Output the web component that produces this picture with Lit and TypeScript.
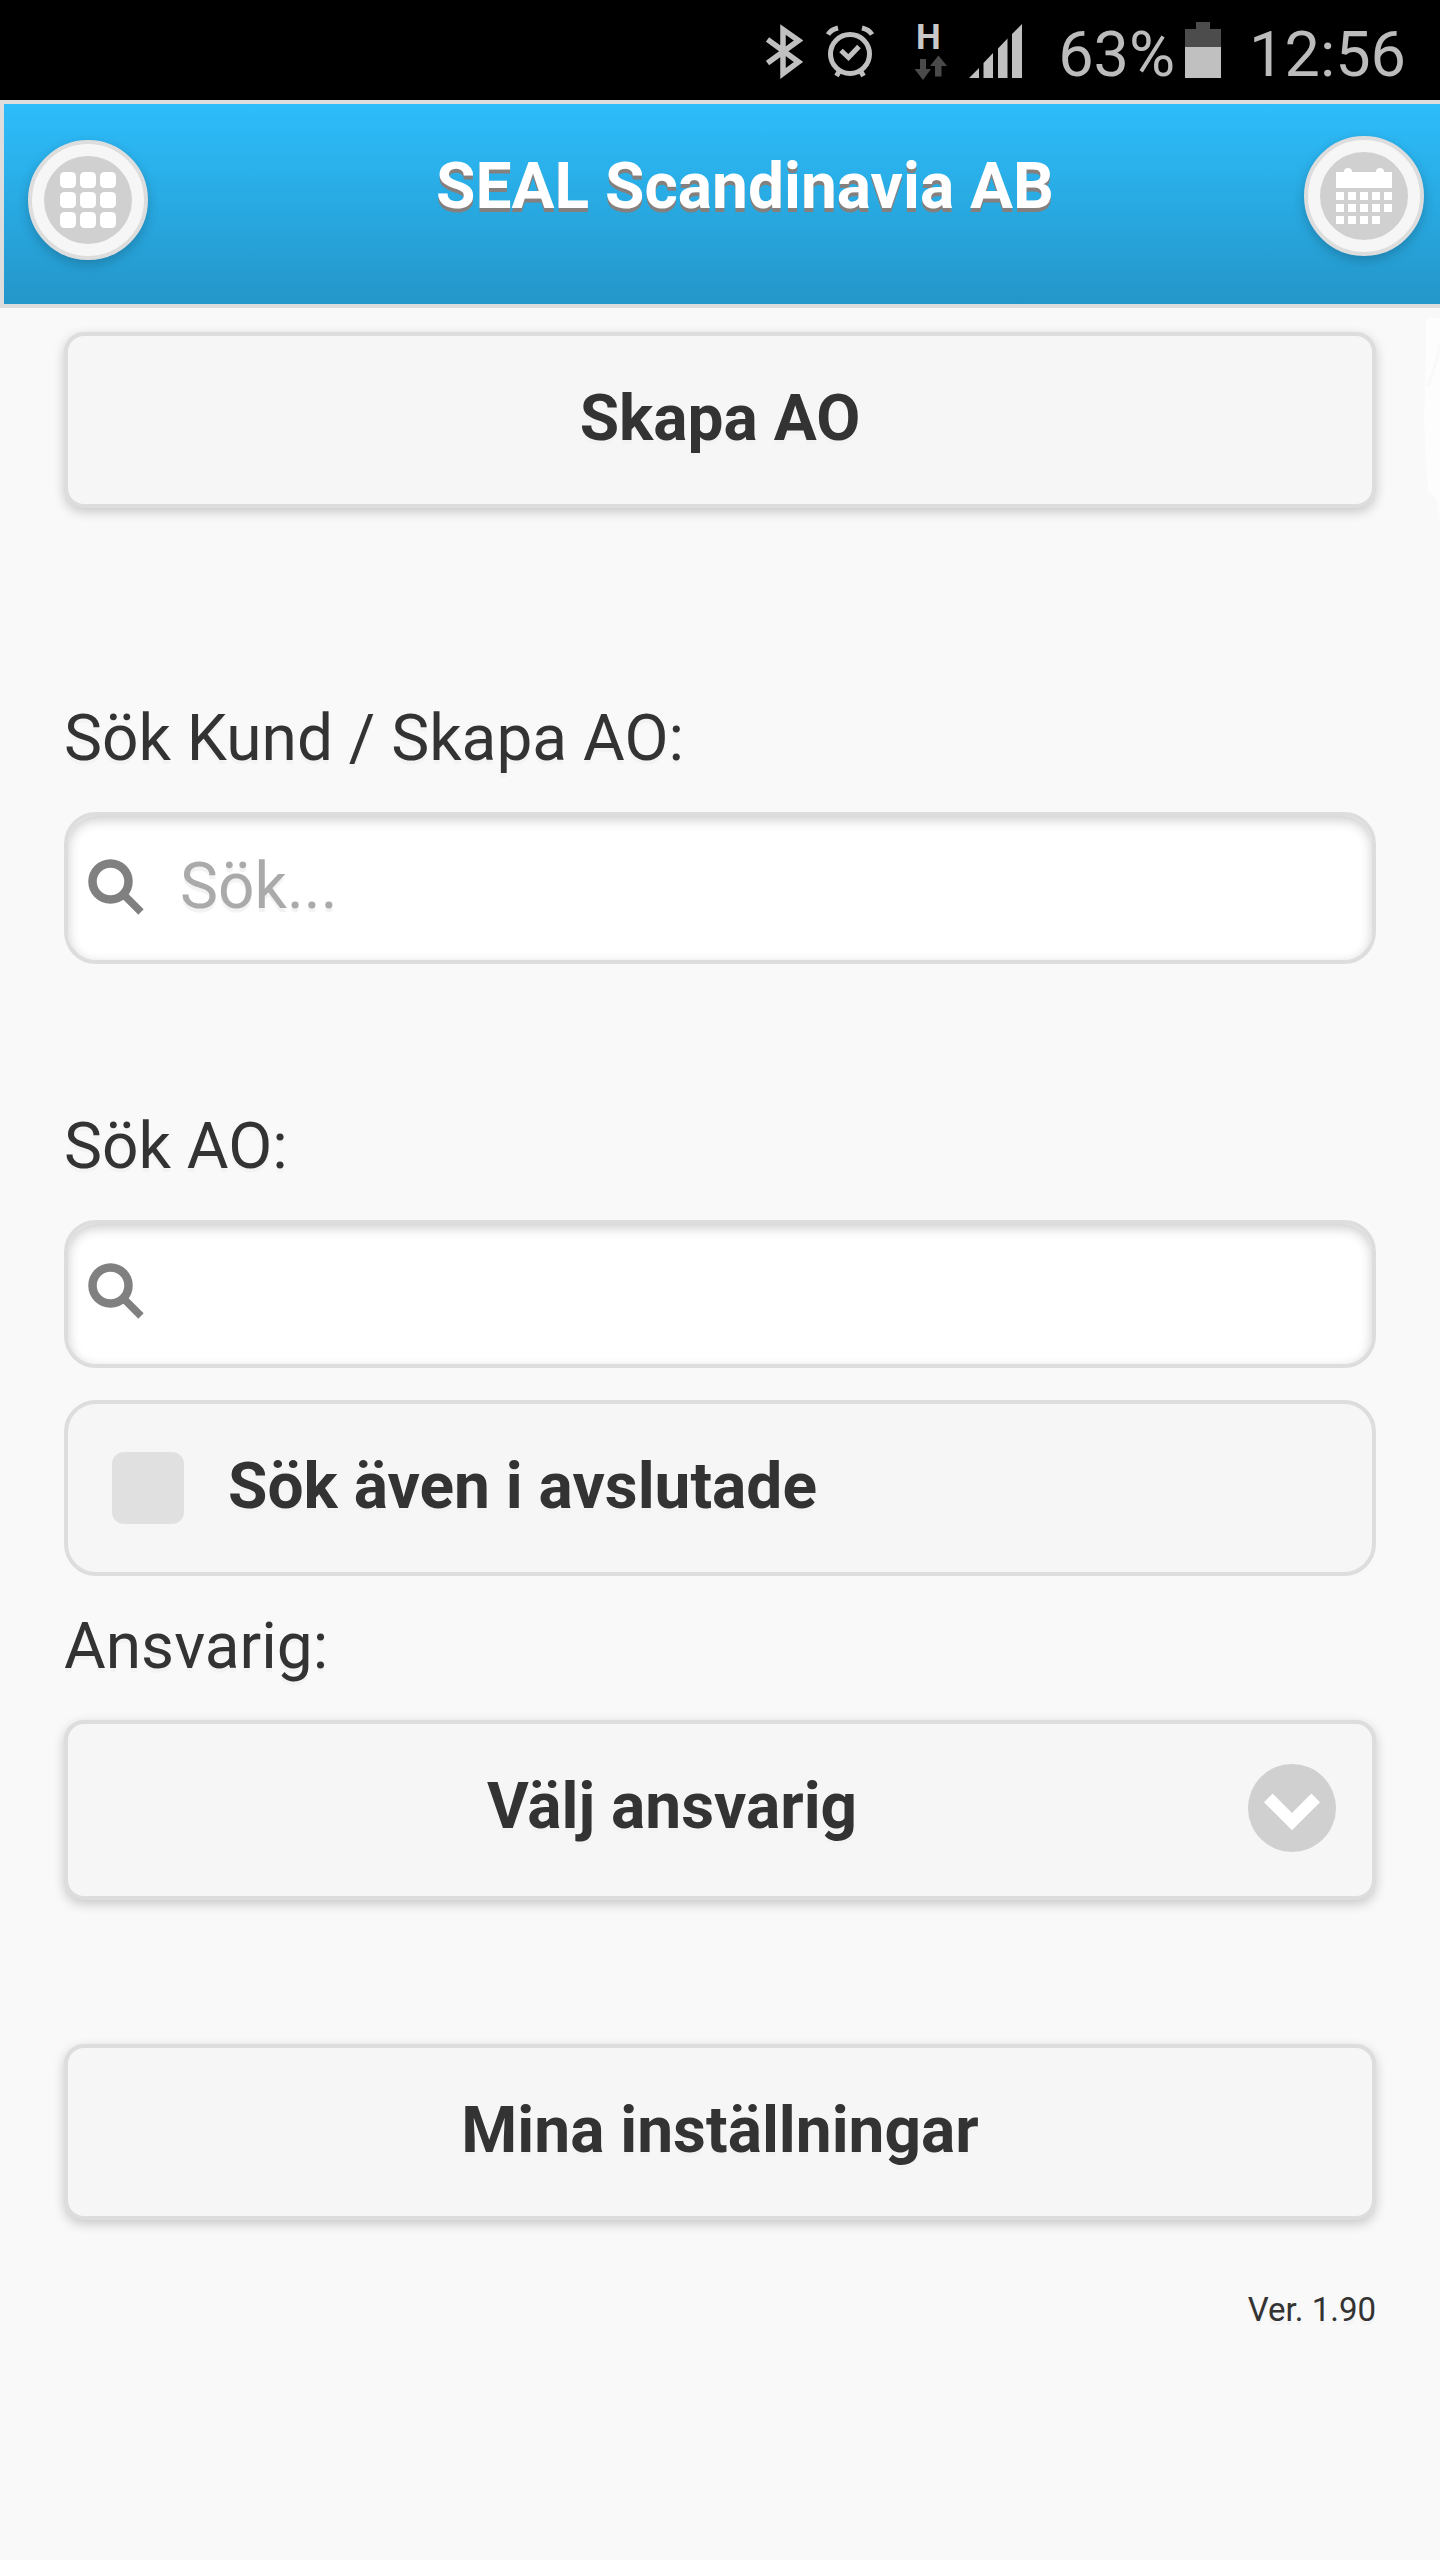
import { LitElement, html, css, svg } from "lit";
import { customElement, property, state } from "lit/decorators.js";

const base = css`
  * {
    box-sizing: border-box;
    margin: 0;
  }
  svg {
    display: block;
    flex: none;
  }
`;

@customElement("status-bar")
export class StatusBar extends LitElement {
  static styles = [
    base,
    css`
      :host {
        display: block;
      }
      .bar {
        display: flex;
        align-items: center;
        justify-content: flex-end;
        height: 100px;
        padding: 0 34px 0 24px;
        background: #000;
        color: #bcbcbc;
        font-size: 63px;
        line-height: 86px;
        text-shadow: none;
      }
      .icons {
        display: flex;
        gap: 22px;
        margin-right: 36px;
      }
      .power {
        display: flex;
        align-items: center;
        gap: 10px;
        margin-right: 28px;
      }
      .network {
        font: bold 35px Roboto, "Liberation Sans", sans-serif;
      }
      .text {
        padding-top: 10px;
      }
    `,
  ];

  render() {
    return html`
      <div class="bar">
        <div class="icons">
          <svg width="37" height="60" viewBox="766 20 37 60" fill="none" stroke="#c0c0c0" role="img" aria-label="Bluetooth">
            <path d="M767.5 39.5L798.5 62L783 73.500V29.500L798.500 40.500L767.500 63" stroke-width="5.500" />
          </svg>
          <svg width="50" height="60" viewBox="825 20 50 60" fill="none" stroke="#c0c0c0" stroke-width="5" role="img" aria-label="Alarm">
            <circle cx="850" cy="54" r="19.500" />
            <path d="M841 50.500L848.500 57.500L859 46.500" />
            <path d="M828 34.500Q831 29.500 838 28M872 34.500Q869 29.500 862 28" />
            <path d="M840 70L836.500 76M860 70L863.500 76" />
          </svg>
          <svg width="50" height="60" viewBox="897 20 50 60" overflow="visible" role="img" aria-label="Mobildata">
            <text class="network" x="916" y="49" fill="#c8c8c8">H</text>
            <path d="M920 59H926V69H931L923 80L914.500 69H920Z" fill="#4a4a4a" />
            <path d="M935 76.500H941.500V66H947L938.500 55.500L930 66H935Z" fill="#4a4a4a" />
          </svg>
          <svg width="53" height="60" viewBox="969 20 53 60" fill="#c0c0c0" role="img" aria-label="Signal">
            <path d="M969 78L979 68V78ZM983.500 78V63L993 53V78ZM998 78V48.500L1007.500 38.500V78ZM1012 78V34L1022 24V78Z" />
          </svg>
        </div>
        <div class="power">
          <span class="text">63%</span>
          <svg width="36" height="60" viewBox="0 0 36 60" role="img" aria-label="Batteri">
            <path d="M11 2H25V9H36V27H0V9H11Z" fill="#4c4c4c" />
            <rect y="27" width="36" height="31" fill="#c0c0c0" />
          </svg>
        </div>
        <span class="text">12:56</span>
      </div>
    `;
  }
}

@customElement("app-header")
export class AppHeader extends LitElement {
  @property() heading = "";

  static styles = [
    base,
    css`
      :host {
        display: block;
      }
      .header {
        display: flex;
        align-items: flex-start;
        min-height: 208px;
        padding: 32px 16px 44px 24px;
        border: 4px solid #ddd;
        border-right: 0;
        background: linear-gradient(#2dbdfb, #2496c9);
      }
      .title {
        flex: 1;
        padding-left: 38px;
        color: #fff;
        font-size: 64px;
        font-weight: 700;
        line-height: 102px;
        text-align: center;
        text-shadow: 0 4px 0 #85807d;
      }
      .round {
        display: flex;
        align-items: center;
        justify-content: center;
        flex: none;
        width: 120px;
        height: 120px;
        padding: 0;
        border: 4px solid #ddd;
        border-radius: 50%;
        background: #f6f6f6;
        box-shadow: 0 4px 12px rgba(0, 0, 0, 0.2);
      }
      .menu {
        align-self: flex-end;
      }
    `,
  ];

  render() {
    const days = [0, 1, 2].flatMap((row) =>
      [0, 1, 2, 3, 4]
        .filter((col) => row < 2 || col < 4)
        .map((col) => svg`<rect x=${16 + col * 12} y=${40 + row * 12} width="8" height="8" />`)
    );
    const tiles = [0, 1, 2].flatMap((row) =>
      [0, 1, 2].map(
        (col) => svg`<rect x=${16 + col * 20} y=${16 + row * 20} width="16" height="16" rx="4.500" />`
      )
    );
    return html`
      <header class="header">
        <button class="round menu" type="button" aria-label="Meny">
          <svg width="88" height="88" viewBox="0 0 88 88" fill="#fff">
            <circle cx="44" cy="44" r="44" fill="#d0d0d0" />
            ${tiles}
          </svg>
        </button>
        <h1 class="title">${this.heading}</h1>
        <button class="round" type="button" aria-label="Kalender">
          <svg width="88" height="88" viewBox="0 0 88 88" fill="#fff">
            <circle cx="44" cy="44" r="44" fill="#d0d0d0" />
            <rect x="16" y="20" width="56" height="16" />
            <circle cx="28" cy="20" r="4" />
            <circle cx="60" cy="20" r="4" />
            ${days}
          </svg>
        </button>
      </header>
    `;
  }
}

@customElement("app-root")
export class AppRoot extends LitElement {
  @state() private includeClosed = false;

  static styles = [
    base,
    css`
      :host {
        display: block;
        position: relative;
        min-height: 100vh;
        overflow: hidden;
        background: #f9f9f9;
        color: #333;
        font-family: Roboto, "Liberation Sans", sans-serif;
        font-size: 64px;
        line-height: 86px;
        text-shadow: 0 4px 0 #f3f3f3;
      }
      .content {
        display: flex;
        flex-direction: column;
        padding: 24px 64px 64px;
      }
      .button,
      .check {
        width: 100%;
        padding: 40px 64px 42px;
        border: 4px solid #ddd;
        border-radius: 20px;
        background: #f6f6f6;
        color: #333;
        font: inherit;
        font-weight: 700;
        text-align: center;
        text-shadow: inherit;
      }
      .button {
        box-shadow: 0 4px 12px rgba(0, 0, 0, 0.2);
      }
      .field {
        display: flex;
        flex-direction: column;
        gap: 30px;
      }
      .customer {
        margin-top: 188px;
      }
      .orders {
        margin-top: 140px;
      }
      .search {
        display: flex;
        align-items: center;
        gap: 36px;
        padding: 28px 20px 30px;
        border: 4px solid #ddd;
        border-radius: 32px;
        background: #fff;
        box-shadow: inset 0 4px 12px rgba(0, 0, 0, 0.2);
      }
      .orders .search {
        padding-top: 24px;
      }
      .input {
        flex: 1;
        min-width: 0;
        height: 86px;
        padding: 0;
        border: 0;
        outline: 0;
        background: none;
        color: #333;
        font: inherit;
        text-shadow: inherit;
      }
      .input::placeholder {
        color: #aaa;
        opacity: 1;
      }
      .check {
        display: flex;
        align-items: center;
        gap: 44px;
        margin-top: 32px;
        padding-left: 44px;
        border-radius: 32px;
        text-align: left;
      }
      .box {
        appearance: none;
        flex: none;
        width: 72px;
        height: 72px;
        margin: 2px 0 0;
        border-radius: 12px;
        background: #e0e0e0;
      }
      .box:checked {
        background: #38c;
      }
      .responsible {
        margin-top: 28px;
      }
      .picker {
        display: grid;
        align-items: center;
      }
      .picker > * {
        grid-area: 1 / 1;
      }
      .select {
        appearance: none;
        padding: 40px 160px 46px 64px;
        text-align-last: center;
      }
      .arrow {
        justify-self: end;
        margin: 0 40px 4px 0;
        pointer-events: none;
      }
      .settings {
        margin-top: 144px;
      }
      .version {
        margin-top: 70px;
        font-size: 33px;
        line-height: 40px;
        text-align: right;
      }
      .edge {
        position: absolute;
        top: 310px;
        right: 0;
      }
    `,
  ];

  private searchIcon() {
    return html`
      <svg width="56" height="56" viewBox="0 0 56 56" fill="none" stroke="#808080" aria-hidden="true">
        <circle cx="22.500" cy="22.500" r="18" stroke-width="8.500" />
        <path d="M35 35L53 53" stroke-width="7.500" />
      </svg>
    `;
  }

  private toggleClosed(event: Event) {
    this.includeClosed = (event.target as HTMLInputElement).checked;
  }

  render() {
    return html`
      <status-bar></status-bar>
      <app-header heading="SEAL Scandinavia AB"></app-header>
      <main class="content">
        <button class="button" type="button">Skapa AO</button>

        <div class="field customer">
          <label for="customer">Sök Kund / Skapa AO:</label>
          <div class="search">
            ${this.searchIcon()}
            <input class="input" id="customer" type="text" placeholder="Sök..." />
          </div>
        </div>

        <div class="field orders">
          <label for="order">Sök AO:</label>
          <div class="search">
            ${this.searchIcon()}
            <input class="input" id="order" type="text" />
          </div>
        </div>

        <label class="check">
          <input class="box" type="checkbox" .checked=${this.includeClosed} @change=${this.toggleClosed} />
          <span>Sök även i avslutade</span>
        </label>

        <div class="field responsible">
          <label for="responsible">Ansvarig:</label>
          <div class="picker">
            <select class="button select" id="responsible">
              <option>Välj ansvarig</option>
            </select>
            <svg class="arrow" width="88" height="88" viewBox="0 0 88 88" aria-hidden="true">
              <circle cx="44" cy="44" r="44" fill="#d0d0d0" />
              <path d="M24.600 29.600L44 49L63.400 29.600L72 38.200L44 66.200L16 38.200Z" fill="#fff" />
            </svg>
          </div>
        </div>

        <button class="button settings" type="button">Mina inställningar</button>
        <p class="version">Ver. 1.90</p>
      </main>
      <svg class="edge" width="16" height="220" viewBox="0 0 16 220" aria-hidden="true">
        <path d="M16 8H2V50L0 110L4 182L12 188L16 210Z" fill="#fdfdfd" />
        <path d="M16 32Q12 58 4 76" fill="none" stroke="#f9f9f9" stroke-width="3" />
      </svg>
    `;
  }
}
